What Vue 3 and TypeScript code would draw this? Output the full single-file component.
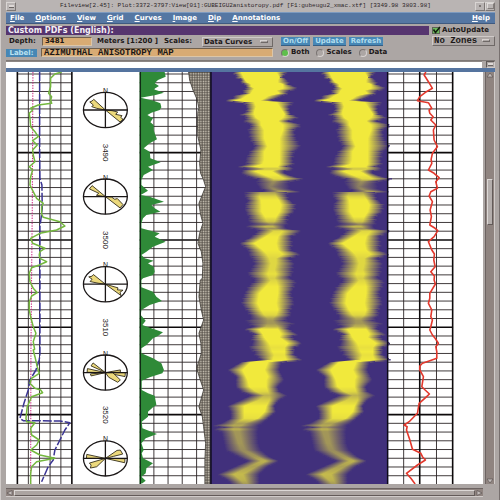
<script setup lang="ts">
import { ref } from 'vue'

type Point = [number, number]
/** y, outer left, inner left, inner right, outer right, strength */
type BandKey = [number, number, number, number, number, number]

const menus = ['File', 'Options', 'View', 'Grid', 'Curves', 'Image', 'Dip', 'Annotations']
const actions = ['On/Off', 'Update', 'Refresh']
const modes = ['Both', 'Scales', 'Data']

const depth = ref('3481')
const label = ref('AZIMUTHAL ANISOTROPY MAP')
const mode = ref('Both')
const autoUpdate = ref(true)
const command = ref('')

const TOP = 72
const BOTTOM = 484

/** Samples are y, x pairs in thirds of a unit, measured from an origin. */
function trace(ox: number, oy: number, flat: number[]): Point[] {
  const out: Point[] = []
  for (let i = 0; i < flat.length; i += 2) out.push([ox + flat[i + 1] / 3, oy + flat[i] / 3])
  return out
}
const str = (pts: Point[]) => pts.map(([x, y]) => `${x.toFixed(1)},${y.toFixed(1)}`).join(' ')

const gridLines = Array.from({ length: 47 }, (_, i) => {
  const k = i - 9
  return { y: 152.6 + k * 8.733, major: k % 10 === 0 }
})

const gamma = str([
  ...trace(0, 70, [6, 185, 12, 165, 25, 152, 50, 152, 70, 146, 80, 155, 90, 152, 100, 155, 105, 115, 115, 92, 120, 98, 130, 88, 145, 90, 170, 92, 185, 105, 200, 115, 212, 98, 225, 112, 240, 98, 255, 100, 275, 105, 290, 88, 300, 98, 320, 92, 345, 90, 365, 100, 385, 110, 400, 130, 410, 125]),
  ...trace(0, 210, [0, 125, 12, 125, 22, 130, 35, 180, 48, 195, 60, 170, 70, 120, 85, 92, 100, 98, 115, 135, 125, 120, 135, 118, 145, 120, 155, 140, 165, 118, 173, 95, 190, 88, 215, 90, 235, 100, 248, 112, 258, 95, 275, 88, 300, 88, 320, 92, 350, 100, 370, 108, 395, 100, 418, 104]),
  ...trace(0, 350, [0, 100, 20, 105, 50, 112, 70, 118, 85, 95, 100, 90, 115, 105, 120, 122, 128, 128, 140, 95, 170, 82, 205, 78, 215, 80, 218, 105, 235, 92, 255, 95, 270, 118, 285, 110, 300, 92, 315, 120, 325, 165, 335, 110, 350, 95, 370, 92, 402, 92]),
])
const caliper = str([
  ...trace(0, 70, [6, 119, 240, 119, 325, 120, 345, 126, 415, 127]),
  ...trace(0, 210, [20, 124, 50, 120, 418, 120]),
  ...trace(0, 350, [10, 120, 30, 118, 60, 108, 90, 90, 120, 85, 160, 72, 205, 60, 212, 70, 213, 180, 218, 210, 240, 195, 270, 180, 300, 165, 330, 160, 350, 145, 395, 125]),
])
const bitSize = str([...trace(0, 70, [6, 99, 418, 97]), ...trace(0, 350, [0, 93, 402, 92])])

const anisotropy = trace(130, 70, [6, 105, 20, 108, 30, 85, 40, 75, 48, 88, 58, 72, 68, 103, 75, 78, 83, 33, 92, 72, 100, 92, 112, 95, 120, 90, 128, 65, 135, 53, 145, 70, 157, 62, 165, 72, 180, 72, 190, 75, 208, 82, 220, 60, 235, 42, 245, 60, 265, 62, 277, 93, 290, 55, 300, 70, 315, 42, 330, 35, 345, 35, 362, 55, 375, 33, 380, 60, 395, 103, 405, 65, 415, 75, 425, 92, 435, 50, 445, 40, 460, 35, 475, 35, 490, 90, 500, 75, 515, 108, 530, 70, 545, 50, 555, 35, 565, 45, 572, 72, 580, 55, 590, 72, 605, 75, 615, 70, 625, 40])
  .concat(trace(130, 280, [0, 35, 22, 35, 35, 70, 50, 80, 63, 97, 75, 60, 90, 35, 105, 33, 122, 48, 135, 38, 145, 65, 157, 100, 168, 85, 175, 70, 195, 50, 205, 35, 220, 35, 235, 70, 250, 95, 270, 103, 280, 98, 292, 60, 302, 36, 330, 36, 340, 55, 347, 75, 375, 80, 382, 70, 395, 55, 410, 55, 425, 36, 445, 38, 462, 82, 475, 48, 490, 35, 510, 42, 520, 36, 535, 40, 550, 70, 565, 50, 580, 48, 590, 35, 602, 48, 610, 38]))
const anisotropyFill = str([[140, TOP], ...anisotropy, [140, BOTTOM]])

const errorEdge = trace(130, 70, [6, 177, 30, 180, 60, 190, 90, 203, 115, 208, 125, 205, 160, 203, 200, 205, 240, 214, 280, 210, 310, 213, 330, 222, 350, 228, 370, 220, 400, 208, 430, 212, 460, 220, 490, 210, 520, 205, 545, 215, 580, 220, 625, 218])
  .concat(trace(130, 280, [0, 212, 50, 208, 90, 215, 120, 222, 160, 208, 190, 214, 220, 215, 265, 201, 300, 212, 330, 222, 380, 208, 410, 218, 440, 222, 490, 228, 540, 226, 612, 226]))
const errorFill = str([...errorEdge, [211, BOTTOM], [211, TOP]])

const slowness = str([
  ...trace(380, 70, [6, 140, 15, 135, 35, 148, 55, 160, 65, 142, 80, 122, 92, 115, 98, 148, 115, 158, 120, 150, 130, 152, 140, 162, 150, 155, 165, 170, 180, 163, 210, 165, 230, 175, 250, 160, 268, 156, 280, 158, 300, 148, 310, 165, 323, 180, 335, 170, 355, 175, 365, 155, 378, 150, 395, 160, 420, 153, 440, 157, 465, 152, 475, 168, 482, 176, 500, 165, 515, 148, 540, 158, 552, 166, 570, 164, 590, 168, 605, 155, 618, 166]),
  ...trace(380, 280, [0, 165, 12, 169, 40, 152, 55, 152, 70, 148, 90, 158, 110, 155, 120, 160, 140, 155, 150, 152, 165, 160, 175, 168, 190, 178, 200, 170, 215, 173, 235, 173, 243, 150, 250, 130, 258, 122, 270, 122, 290, 133, 320, 128, 330, 138, 342, 151, 352, 140, 370, 120, 400, 115, 425, 90, 435, 75, 440, 84, 450, 82, 480, 92, 508, 100, 520, 125, 530, 130, 540, 139, 555, 115, 580, 82, 595, 95, 612, 108]),
])

const upperKeys: BandKey[] = [
  [6, 85, 110, 215, 250, 1], [22, 95, 118, 225, 232, 1], [30, 112, 122, 220, 250, 1], [38, 106, 130, 220, 255, 1],
  [42, 120, 140, 235, 252, 1], [50, 122, 140, 235, 270, 1], [55, 125, 150, 235, 285, 1], [62, 112, 145, 215, 255, 1],
  [70, 120, 140, 225, 250, 1], [78, 85, 125, 190, 235, 1], [85, 85, 115, 180, 215, 1], [93, 55, 90, 165, 200, 1],
  [96, 115, 150, 215, 270, 1], [110, 125, 155, 225, 255, 1], [125, 125, 150, 235, 255, 1], [133, 108, 150, 240, 260, 1],
  [143, 125, 155, 235, 285, 1], [153, 115, 170, 220, 250, 1], [165, 140, 170, 235, 295, 1], [180, 130, 180, 235, 270, 1],
  [205, 135, 180, 225, 275, 1], [230, 150, 190, 225, 290, 1], [245, 135, 180, 225, 270, 1], [270, 122, 180, 225, 265, 1],
  [282, 125, 175, 225, 270, 1], [290, 102, 150, 220, 250, 1], [297, 130, 190, 225, 275, 0.8], [303, 108, 150, 200, 235, 1],
  [315, 115, 180, 220, 250, 1], [327, 160, 210, 240, 300, 0.9], [335, 155, 205, 210, 255, 0.5], [350, 160, 195, 202, 255, 0.4],
  [360, 175, 210, 215, 260, 0.5], [364, 185, 235, 245, 295, 0.6], [367, 120, 170, 210, 250, 0.6], [380, 120, 165, 215, 250, 0.9],
  [390, 130, 170, 222, 255, 1], [405, 122, 172, 230, 275, 1], [425, 122, 172, 225, 270, 1], [440, 132, 182, 215, 250, 1],
  [455, 132, 188, 210, 250, 0.8], [463, 140, 200, 205, 250, 0.45], [470, 120, 180, 205, 240, 0.75], [476, 150, 190, 215, 250, 0.5],
  [483, 160, 210, 235, 295, 0.9], [500, 140, 185, 220, 260, 1], [520, 105, 150, 215, 265, 1], [540, 130, 175, 220, 260, 1],
  [553, 132, 188, 235, 290, 0.95], [565, 142, 195, 215, 255, 0.9], [580, 148, 200, 215, 270, 0.9], [600, 138, 195, 210, 265, 0.9],
  [612, 128, 190, 215, 265, 0.95], [625, 145, 195, 210, 255, 0.85],
]
const lowerKeys: BandKey[] = [
  [2, 150, 200, 215, 275, 0.9], [20, 130, 185, 220, 270, 1], [40, 120, 165, 220, 260, 1], [70, 110, 160, 215, 270, 1],
  [90, 125, 170, 220, 258, 1], [105, 135, 180, 215, 260, 0.9], [115, 140, 190, 205, 250, 0.65], [122, 122, 190, 205, 245, 0.55],
  [130, 130, 190, 210, 270, 0.55], [140, 145, 185, 220, 255, 0.7], [148, 118, 165, 220, 255, 1], [162, 150, 175, 230, 280, 1],
  [172, 140, 180, 225, 262, 1], [190, 145, 195, 250, 295, 1], [203, 132, 200, 240, 270, 0.95], [215, 148, 205, 240, 270, 1],
  [225, 150, 210, 240, 270, 0.95], [240, 170, 205, 245, 297, 1], [246, 110, 140, 190, 232, 1], [270, 68, 115, 180, 225, 1],
  [290, 95, 125, 190, 235, 1], [300, 93, 130, 185, 240, 1], [320, 93, 135, 185, 220, 1], [335, 110, 155, 190, 225, 0.9],
  [346, 138, 180, 195, 250, 0.7], [360, 108, 165, 195, 225, 0.85], [378, 68, 120, 185, 210, 1], [395, 78, 120, 180, 215, 1],
  [415, 78, 120, 160, 192, 0.95], [430, 50, 95, 120, 175, 0.6], [437, 22, 85, 110, 162, 0.65], [442, 60, 90, 100, 165, 0.5],
  [447, 22, 85, 105, 162, 0.7], [455, 50, 90, 105, 160, 0.55], [490, 58, 102, 112, 162, 0.55], [510, 62, 110, 122, 170, 0.5],
  [530, 100, 145, 160, 195, 0.55], [543, 130, 172, 185, 225, 0.7], [560, 90, 135, 155, 190, 0.6], [583, 38, 88, 115, 165, 0.75],
  [600, 68, 108, 122, 165, 0.7], [614, 80, 120, 130, 165, 0.55],
]
const bandKeys: BandKey[] = [
  ...upperKeys.map((k) => [70 + k[0] / 3, ...k.slice(1)] as BandKey),
  ...lowerKeys.map((k) => [280 + k[0] / 3, ...k.slice(1)] as BandKey),
]

const COLD = [65, 48, 124]
const HOT = [241, 233, 60]
const shade = (power: number) => `rgb(${COLD.map((c, i) => Math.round(c + (HOT[i] - c) * power)).join(' ')})`

/** One strip per unit of depth, interpolated between keys with a small repeatable ripple. */
const strips = Array.from({ length: BOTTOM - TOP }, (_, i) => {
  const y = TOP + i
  let n = 1
  while (n < bandKeys.length - 1 && bandKeys[n][0] < y + 0.5) n++
  const a = bandKeys[n - 1]
  const b = bandKeys[n]
  const t = Math.min(1, Math.max(0, (y + 0.5 - a[0]) / (b[0] - a[0])))
  const at = (c: number) => a[c] + (b[c] - a[c]) * t
  const amp = y < 360 ? 1.6 : 0.4
  const ripple = (Math.sin(y * 1.7) + Math.sin(y * 2.9 + 1)) * amp / 2
  const x0 = 205 + at(1) / 3 + ripple
  const x1 = 205 + at(4) / 3 + ripple
  const w = x1 - x0
  const s1 = (205 + at(2) / 3 - x0) / w
  const s2 = (205 + at(3) / 3 - x0) / w
  return { id: `strip${i}`, y, x: x0, w, s1, s2, color: shade(at(5)) }
})
const coldColor = shade(0)
const bandOffsets = [0, 88.4]

const roses = [
  { y: 110, petals: ['0,0 -35,-32 -40,-27 -47,-24 -36,-15 -41,-10 -26,-5', '0,0 20,2 37,6 31,13 50,17 46,22 53,28 44,36'] },
  { y: 196.6, petals: ['0,0 -40,-33 -48,-23 -20,-10 -27,-4', '0,0 18,1 28,8 36,6 53,24 44,34'] },
  { y: 284.2, petals: ['0,0 -36,-29 -40,-24 -50,-22 -40,-15 -46,-8 -22,-3', '0,0 38,11 36,17 53,18 44,24 47,34'] },
  { y: 372.6, petals: ['0,0 -37,-29 -43,-20 -16,-8', '0,0 -54,-12 -55,-1', '0,0 -45,4 -43,10', '0,0 45,-8 45,-1', '0,0 60,0 59,12', '0,0 22,0 45,22 37,29 10,14'] },
  { y: 458.4, petals: ['0,0 -56,-12 -57,0', '0,0 -48,14 -43,20 -45,29 -26,25', '0,0 35,-24 45,-25 52,-13 24,-6', '0,0 59,1 58,13'] },
]
const depthLabels = [
  { y: 152.6, text: '3490' },
  { y: 240, text: '3500' },
  { y: 327.4, text: '3510' },
  { y: 414.8, text: '3520' },
]
const leftTicks = [28.4, 39.6, 50.2, 61]
const midTicks = [154.2, 168.4, 182.6, 197]
const rightTicks = [404.5, 437.4]
</script>

<template>
  <div class="window">
    <header class="title">
      <button class="knob" type="button" aria-label="Window menu"><i class="dash"></i></button>
      <span class="title-text">Fileview[2.45]: Plot:3372-3797:View[01]:GUBEIGU2anistoropy.pdf [F1:gubeugu2_xmac.xtf] [3349.98 3803.98]</span>
      <button class="knob" type="button" aria-label="Minimize"><i class="dot"></i></button>
      <button class="knob" type="button" aria-label="Maximize"><i class="box"></i></button>
    </header>

    <nav class="menubar">
      <button v-for="m in menus" :key="m" type="button" class="menu"><u>{{ m[0] }}</u>{{ m.slice(1) }}</button>
      <button type="button" class="menu help"><u>H</u>elp</button>
    </nav>

    <section class="panel">
      <div class="main">
        <h1 class="heading">Custom PDFs (English):</h1>
        <div class="row">
          <div class="fields">
            <label class="name" for="depth">Depth:</label>
            <input id="depth" v-model="depth" class="entry depth" type="text" />
            <span class="meters">Meters [1:200 ]</span>
            <label class="scales" for="scales">Scales:</label>
            <span class="picker wide">
              <select id="scales"><option>Data Curves</option></select>
            </span>
          </div>
          <div class="actions">
            <button v-for="a in actions" :key="a" type="button" class="action">{{ a }}</button>
          </div>
        </div>
        <div class="row">
          <div class="fields">
            <label class="tag" for="label">Label:</label>
            <input id="label" v-model="label" class="entry long" type="text" />
          </div>
          <div class="modes">
            <label v-for="m in modes" :key="m" class="mode"><input v-model="mode" type="radio" name="mode" :value="m" />{{ m }}</label>
          </div>
        </div>
      </div>
      <div class="side">
        <label class="auto"><input v-model="autoUpdate" type="checkbox" /><svg class="tick" viewBox="0 0 9 8" aria-hidden="true"><path d="M1.5 3.5 L3.5 6.5 L8 1" /></svg>AutoUpdate</label>
        <span class="picker">
          <select class="mono" aria-label="Zones"><option>No Zones</option></select>
        </span>
      </div>
    </section>

    <div class="command">
      <input v-model="command" type="text" aria-label="Command" />
      <button class="pane-knob" type="button" aria-label="Resize pane"><i class="dash"></i></button>
    </div>
    <div class="divider"></div>

    <main class="work">
      <svg id="plot" class="plot" viewBox="6 72 478 412" preserveAspectRatio="none" role="img" aria-label="Azimuthal anisotropy log">
        <defs>
          <pattern id="mesh" width="2.5" height="2.5" patternUnits="userSpaceOnUse">
            <rect width="2.5" height="2.5" fill="#4c4640" />
            <rect x="0.5" y="0.5" width="1.6" height="1.6" fill="#dcd6c6" />
          </pattern>
          <linearGradient v-for="s in strips" :id="s.id" :key="s.id">
            <stop offset="0" :stop-color="coldColor" />
            <stop :offset="s.s1" :stop-color="s.color" />
            <stop :offset="s.s2" :stop-color="s.color" />
            <stop offset="1" :stop-color="coldColor" />
          </linearGradient>
        </defs>
        <rect x="6" y="72" width="478" height="412" fill="#fff" />

        <g class="grid">
          <template v-for="g in gridLines" :key="g.y">
            <line x1="17" x2="72" :y1="g.y" :y2="g.y" :class="{ major: g.major }" />
            <line x1="140" x2="211" :y1="g.y" :y2="g.y" :class="{ major: g.major }" />
            <line x1="388" x2="454" :y1="g.y" :y2="g.y" :class="{ major: g.major }" />
          </template>
          <line v-for="x in [...leftTicks, ...midTicks, ...rightTicks]" :key="x" :x1="x" :x2="x" y1="72" y2="484" />
          <line v-for="x in [17.4, 72, 420.6, 453.6]" :key="x" :x1="x" :x2="x" y1="72" y2="484" class="major" />
        </g>

        <polyline :points="bitSize" class="curve" stroke="#c8207e" stroke-dasharray="1.4 1.2" />
        <polyline :points="caliper" class="curve" stroke="#3a3494" stroke-width="1.5" stroke-dasharray="9 2" />
        <polyline :points="gamma" class="curve" stroke="#74b83e" stroke-width="1.5" />

        <g v-for="r in roses" :key="r.y" :transform="`translate(105.6 ${r.y})`">
          <polygon v-for="p in r.petals" :key="p" :points="p" transform="scale(0.3333)" class="petal" />
          <ellipse rx="22" ry="17.6" class="ring" />
          <path d="M-22 0 H22 M0 -17.6 V17.6" class="ring" />
          <text class="north" y="-17">N</text>
        </g>
        <text v-for="d in depthLabels" :key="d.text" class="depth-label" :transform="`translate(103.4 ${d.y}) rotate(90)`">{{ d.text }}</text>

        <polygon :points="anisotropyFill" fill="#2f8a38" />
        <line x1="140.6" x2="140.6" y1="72" y2="484" stroke="#102a14" stroke-width="1.4" />
        <polygon :points="errorFill" fill="url(#mesh)" stroke="#3c3832" stroke-width="0.8" />

        <rect x="211" y="72" width="178" height="412" :fill="coldColor" />
        <g v-for="o in bandOffsets" :key="o" :transform="`translate(${o} 0)`">
          <rect v-for="s in strips" :key="s.id" :x="s.x" :y="s.y" :width="s.w" height="1.5" :fill="`url(#${s.id})`" />
        </g>
        <path d="M211.4 72 V484 M388.4 72 V484" stroke="#0c0a18" stroke-width="1.4" />
        <polyline :points="slowness" class="curve" stroke="#e2382c" stroke-width="1.6" />
      </svg>
      <div class="vscroll" role="scrollbar" aria-label="Scroll depth" aria-controls="plot" aria-valuenow="30">
        <svg class="arrow" viewBox="0 0 8 6" aria-hidden="true"><path d="M4 1 L7 5 H1 Z" /></svg>
        <div class="before"></div>
        <div class="vthumb"></div>
        <div class="after"></div>
        <svg class="arrow" viewBox="0 0 8 6" aria-hidden="true"><path d="M4 5 L7 1 H1 Z" /></svg>
      </div>
    </main>

    <footer class="hscroll">
      <svg class="arrow" viewBox="0 0 8 6" aria-hidden="true"><path d="M1 3 L6 0.5 V5.5 Z" /></svg>
      <div class="hthumb" role="scrollbar" aria-orientation="horizontal" aria-label="Scroll tracks" aria-controls="plot" aria-valuenow="0"></div>
      <svg class="arrow" viewBox="0 0 8 6" aria-hidden="true"><path d="M7 3 L2 0.5 V5.5 Z" /></svg>
    </footer>
  </div>
</template>

<style>
html,
body,
#app {
  height: 100%;
  margin: 0;
}
</style>

<style scoped>
.window {
  display: flex;
  flex-direction: column;
  box-sizing: border-box;
  height: 100%;
  padding: 0 4px 3px 5px;
  overflow: hidden;
  background: #aca6a4;
  border-left: 1px solid #d2cdcb;
  border-right: 1px solid #77706f;
  color: #1c1818;
  font: bold 7px/9px "DejaVu Sans", sans-serif;
}
button,
input,
select {
  box-sizing: border-box;
  margin: 0;
  padding: 0;
  border: 0;
  border-radius: 0;
  background: none;
  color: inherit;
  font: inherit;
  appearance: none;
}
.title {
  display: flex;
  flex: none;
  align-items: center;
  height: 12px;
  background: #b9b4b3;
}
.title-text {
  flex: 1;
  padding-left: 44px;
  overflow: hidden;
  white-space: nowrap;
  font: 6px/8px "Liberation Mono", monospace;
  color: #2c2628;
}
.knob {
  display: grid;
  place-items: center;
  width: 10px;
  height: 9px;
  border: 1px solid;
  border-color: #d9d5d3 #7c7674 #7c7674 #d9d5d3;
}
.dash {
  width: 5px;
  height: 2px;
  background: #ddd8d6;
  border-bottom: 1px solid #6c6664;
}
.dot {
  width: 2px;
  height: 2px;
  background: #7c7674;
}
.box {
  width: 5px;
  height: 4px;
  border: 1px solid;
  border-color: #dfdbd9 #827c7a #827c7a #dfdbd9;
}
.menubar {
  display: flex;
  flex: none;
  align-items: center;
  gap: 11px;
  height: 12px;
  padding: 0 5px 0 4px;
  background: #5577a3;
  border-top: 1px solid #7d9abf;
  border-bottom: 1px solid #3f5a80;
  box-sizing: border-box;
  color: #fff;
}
.menu {
  line-height: 9px;
}
.help {
  margin-left: auto;
}
.panel {
  display: flex;
  flex: none;
  gap: 3px;
  box-sizing: border-box;
  height: 37px;
  padding: 2px 0 0;
  border-bottom: 1px solid #7e7876;
}
.main {
  flex: 1;
  min-width: 0;
}
.heading {
  margin: 0 0 1px;
  padding-left: 2px;
  background: #56356f;
  color: #f3eef5;
  font: bold 8px/9px "DejaVu Sans", sans-serif;
}
.row {
  display: flex;
  align-items: center;
  gap: 8px;
  height: 11px;
}
.fields {
  display: flex;
  align-items: center;
  flex: 0 0 267px;
}
.name {
  width: 36px;
  padding-left: 3px;
  box-sizing: border-box;
}
.entry {
  height: 9px;
  padding-left: 2px;
  background: #d8ab74;
  border: 1px solid;
  border-color: #6f604e #dcc6a8 #dcc6a8 #6f604e;
}
.depth {
  width: 50px;
}
.meters {
  padding: 0 6px 0 5px;
  white-space: nowrap;
}
.scales {
  flex: 1;
}
.picker {
  display: flex;
  position: relative;
  height: 10px;
  border: 1px solid;
  border-color: #cfcac8 #6f6967 #6f6967 #cfcac8;
  box-sizing: border-box;
}
.picker::after {
  content: "";
  position: absolute;
  right: 4px;
  top: 2px;
  width: 8px;
  height: 3px;
  box-sizing: border-box;
  border: 1px solid;
  border-color: #d8d3d1 #6f6967 #6f6967 #d8d3d1;
  pointer-events: none;
}
.picker select {
  width: 100%;
  padding-left: 1px;
  line-height: 8px;
}
.wide {
  width: 71px;
}
.mono,
.long {
  font: bold 9px/8px "Liberation Mono", monospace;
}
.long {
  flex: 1;
}
.tag {
  width: 31px;
  margin-right: 4px;
  background: #4787b5;
  color: #b9e2f2;
  text-align: center;
  line-height: 8px;
}
.actions {
  display: flex;
  gap: 3px;
}
.action {
  padding: 0 2px;
  background: #4787b5;
  border-bottom: 1px solid #355f85;
  color: #b0deef;
  line-height: 8px;
}
.modes {
  display: flex;
  gap: 7px;
}
.mode {
  display: flex;
  align-items: center;
  gap: 2px;
}
.mode input {
  width: 8px;
  height: 8px;
  border-radius: 50%;
  border: 1px solid;
  border-color: #7a7472 #d8d3d1 #d8d3d1 #7a7472;
}
.mode input:checked {
  background: #5fbf4c;
}
.side {
  flex: 0 0 63px;
}
.auto {
  display: flex;
  align-items: center;
  position: relative;
  gap: 2px;
  height: 9px;
  margin-bottom: 1px;
}
.auto input {
  width: 8px;
  height: 7px;
  background: #6dbb5c;
  border: 1px solid #5a6553;
}
.tick {
  position: absolute;
  left: 0;
  top: 0;
  width: 9px;
  height: 8px;
  pointer-events: none;
}
.auto input:not(:checked) + .tick {
  display: none;
}
.tick path {
  fill: none;
  stroke: #10200c;
  stroke-width: 1.6;
}
.command {
  display: flex;
  flex: none;
  gap: 4px;
  height: 7px;
}
.command input {
  flex: 1;
  background: #fff;
  border-top: 1px solid #8c8684;
}
.pane-knob {
  display: grid;
  place-items: center;
  width: 9px;
  border: 1px solid;
  border-color: #5f5957 #cfcac8 #cfcac8 #5f5957;
}
.divider {
  flex: none;
  height: 4px;
  background: #55749f;
}
.work {
  display: flex;
  flex: 1;
  min-height: 0;
}
.plot {
  flex: 1;
  min-width: 0;
  height: 100%;
}
.grid line {
  stroke: #2b2526;
  stroke-width: 0.9;
}
.grid .major {
  stroke: #0d0a0b;
  stroke-width: 1.6;
}
.curve {
  fill: none;
  stroke-linejoin: round;
}
.petal {
  fill: #ecd97c;
  stroke: #2c2614;
  stroke-width: 2.6;
}
.ring {
  fill: none;
  stroke: #1a1616;
  stroke-width: 1.3;
}
.north {
  font: 7px "Liberation Sans", sans-serif;
  text-anchor: middle;
  fill: #1a1616;
}
.depth-label {
  font: 8px "Liberation Sans", sans-serif;
  text-anchor: middle;
  fill: #1a1616;
}
.vscroll {
  display: flex;
  flex: 0 0 9px;
  flex-direction: column;
  align-items: center;
  margin-left: 2px;
  background: #8f8480;
  border-left: 1px solid #6d6462;
  border-right: 1px solid #d0cbc9;
  box-sizing: border-box;
}
.before {
  flex: 101;
}
.vthumb {
  flex: 45;
  width: 6px;
  background: #b4aeac;
  border: 1px solid;
  border-color: #dcd8d6 #635b59 #635b59 #dcd8d6;
  box-sizing: border-box;
}
.after {
  flex: 254;
}
.arrow {
  flex: none;
  width: 8px;
  height: 6px;
  fill: #c4bebc;
  stroke: #5c5553;
  stroke-width: 0.7;
}
.hscroll {
  display: flex;
  flex: none;
  align-items: center;
  height: 9px;
  margin: 4px 12px 0 0;
  background: #8f8480;
  border-top: 1px solid #6d6462;
  border-bottom: 1px solid #d0cbc9;
  box-sizing: border-box;
}
.hthumb {
  flex: 1;
  height: 6px;
  background: #aba4a1;
  border: 1px solid;
  border-color: #dcd8d6 #635b59 #635b59 #dcd8d6;
  box-sizing: border-box;
}
</style>
